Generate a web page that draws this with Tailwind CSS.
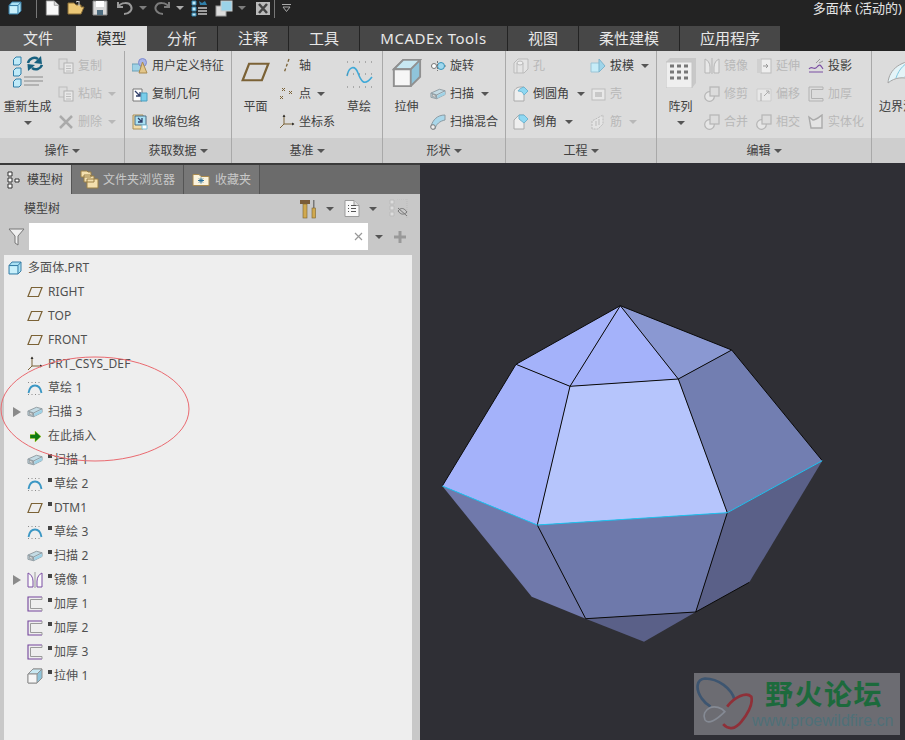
<!DOCTYPE html>
<html lang="zh-CN"><head><meta charset="utf-8"><title>多面体</title>
<script src="https://cdn.jsdelivr.net/npm/@tailwindcss/browser@4"></script></head>
<body class="w-[905px] h-[740px] overflow-hidden bg-[#232323] text-[#404040] text-xs font-['Noto_Sans','Noto_Sans_CJK_SC',sans-serif]">
<svg class="hidden"><defs>
<symbol id="dn" viewBox="0 0 8 4"><polygon points="0,0 8,0 4,4" fill="currentColor"/></symbol>
<symbol id="cube" viewBox="0 0 14 14"><path d="M1 4.500 4 1H13V10L10 13H1Z" fill="#a9e1f4" stroke="#3a7fa6"/><path d="M1 4.500H10V13M10 4.500 13 1" fill="none" stroke="#3a7fa6"/><path d="M2 5.500H9V12H2Z" fill="#c9f0fb"/></symbol>
<symbol id="plane" viewBox="0 0 16 12"><path d="M4.500 1.500H15L11.500 10.500H1Z" fill="none" stroke="#7b6236" stroke-width="1.200"/></symbol>
<symbol id="sketch" viewBox="0 0 16 14"><path d="M1.500 12C2.500 6 5 4.500 8 4.500S13.500 6 14.500 12" fill="none" stroke="#3b97c4" stroke-width="1.800"/><path d="M1 1.500H15M1 13.500H15" stroke="#8a8a8a" stroke-dasharray="1 2.500" fill="none"/></symbol>
<symbol id="sweep" viewBox="0 0 17 12"><path d="M1 5 10 1 16 2.500V6.500L7 11 1 9.500Z" fill="#c4dbe4" stroke="#8f9aa0"/><path d="M1 5 7 7V11M7 7 16 2.500" fill="none" stroke="#8f9aa0"/><path d="M8 7.500 16 3.500V6.500L8 10.500Z" fill="#9fd2e6"/><path d="M2.500 6.500 6 7.500V9.500L2.500 8.500Z" fill="#eee" stroke="#707070" stroke-width=".6"/></symbol>
<symbol id="thick" viewBox="0 0 16 16"><path d="M15 1H1V15H15" fill="none" stroke="#74459c" stroke-width="1.100"/><path d="M15 3.500H3.500V12.500H15V15M15 1V3.500" fill="none" stroke="#9a9a9a"/></symbol>
<symbol id="thickg" viewBox="0 0 16 16"><path d="M15 1H1V15H15V12.500H3.500V3.500H15Z" fill="none" stroke="#b2b2b2"/></symbol>
<symbol id="mirror" viewBox="0 0 16 16"><path d="M8 0V16" stroke="#9a9a9a"/><path d="M6 15H1V1C3.500 2 6 5 6 9Z" fill="#fafafa" stroke="#7b4ea3"/><path d="M10 15H15V1C12.500 2 10 5 10 9Z" fill="#fafafa" stroke="#7b4ea3"/></symbol>
<symbol id="mirrorg" viewBox="0 0 16 16"><path d="M8 0V16" stroke="#b5b5b5"/><path d="M6 15H1V1C3.500 2 6 5 6 9Z" fill="#e8e8e8" stroke="#b5b5b5"/><path d="M10 15H15V1C12.500 2 10 5 10 9Z" fill="#e8e8e8" stroke="#b5b5b5"/></symbol>
<symbol id="extr" viewBox="0 0 16 16"><path d="M1 6 6 1H15V10L10 15H1Z" fill="#8fc4da" stroke="#909090"/><path d="M6 1H15L10 6H1Z" fill="#c8e8f2" stroke="#909090"/><path d="M1 6H10V15H1Z" fill="#f6f6f6" stroke="#909090"/></symbol>
<symbol id="circ" viewBox="0 0 16 16"><circle cx="5.500" cy="10.500" r="4.800" fill="#e6e6e6" stroke="#b5b5b5" stroke-width="1.200"/><rect x="6" y="1" width="9" height="9" fill="#dcdcdc" stroke="#b5b5b5" stroke-width="1.200"/></symbol>
<symbol id="regen" viewBox="0 0 30 32"><g stroke="#2f7ea8" fill="#bfeaf8"><path d="M.5 3.500 3 1H8V7L6 9H.500Z"/><path d="M.5 14.500 3 12H8V18L6 20H.500Z"/><path d="M.5 25.500 3 23H8V29L6 31H.500Z"/></g><path d="M15 7A6.500 6.500 0 0 1 25 3" fill="none" stroke="#17607f" stroke-width="2.500"/><polygon points="28,0 29,8 21,7" fill="#17607f"/><path d="M29 9A6.500 6.500 0 0 1 19 12" fill="none" stroke="#17607f" stroke-width="2.500"/><polygon points="15,15 14.500,8 22,9" fill="#17607f"/><path d="M11 21H30M11 25H30M11 29H26" stroke="#a5a5a5" stroke-width="1.500"/></symbol>
<symbol id="page" viewBox="0 0 16 18"><path d="M1 1H10L15 6V17H1Z" fill="#f8f8f8" stroke="#9a9a9a"/><path d="M10 1V6H15" fill="#ddd" stroke="#9a9a9a"/></symbol>
<symbol id="copy" viewBox="0 0 16 16"><rect x="1" y="1" width="8" height="10" fill="#dcdcdc" stroke="#bcbcbc"/><rect x="6" y="5" width="9" height="10" fill="#e8e8e8" stroke="#b2b2b2"/><path d="M8 8H13M8 10.500H13M8 13H13" stroke="#bcbcbc"/></symbol>
<symbol id="folder" viewBox="0 0 18 14"><path d="M1 13V2H7L9 4H17V13Z" fill="#fbf3dc" stroke="#a98a4e"/></symbol>
</defs></svg>

<header class="h-[26px] pb-[10px] flex items-center text-[#9b9b9b] relative">
  <svg class="w-[14px] h-[14px] ml-[8px] -mt-[1px]" viewBox="0 0 14 14"><use href="#cube"/></svg>
  <span class="w-px h-[19px] bg-[#777] ml-[14px]"></span>
  <svg class="w-[15px] h-[16px] ml-[8px]"><use href="#page"/></svg>
  <svg class="w-[18px] h-[14px] ml-[7px]" viewBox="0 0 18 14"><path d="M1 13V2H7L9 4H14V6H17L14 13Z" fill="#ecc877" stroke="#8d7038"/><path d="M9 1 12 0V5" stroke="#ddd" fill="none"/></svg>
  <svg class="w-[16px] h-[16px] ml-[7px]" viewBox="0 0 16 16"><path d="M1 1H15V15H1Z" fill="#d8d8d8" stroke="#8b8b8b"/><path d="M4 1H12V7H4Z" fill="#fff"/><path d="M5 10H11V15H5Z" fill="#4f6d80"/></svg>
  <svg class="w-[18px] h-[14px] ml-[8px]" viewBox="0 0 18 14"><path d="M2 1V6H7M2 6C5 1 13 1 15 5S13 13 8 13" fill="none" stroke="#9a9a9a" stroke-width="2"/></svg>
  <svg class="w-[8px] h-[4px] ml-[5px] text-[#7d7d7d]"><use href="#dn"/></svg>
  <svg class="w-[17px] h-[14px] ml-[7px]" viewBox="0 0 17 14"><path d="M15 1V6H10M15 6C12 1 4 1 2 5S4 13 9 13" fill="none" stroke="#7b7b7b" stroke-width="2"/></svg>
  <svg class="w-[8px] h-[4px] ml-[5px] text-[#aaa]"><use href="#dn"/></svg>
  <svg class="w-[17px] h-[17px] ml-[7px]" viewBox="0 0 17 17"><path d="M1 1H5V5H1ZM1 7H5V11H1ZM1 13H5V16H1Z" fill="#bfeaf8" stroke="#2f7ea8"/><path d="M7 8H16M7 11H16M7 14H16" stroke="#c8c8c8" stroke-width="1.500"/><path d="M8 1 11 3 14 1 16 5H9Z" fill="#2f7ea8"/></svg>
  <svg class="w-[18px] h-[17px] ml-[7px]" viewBox="0 0 18 17"><rect x="1" y="6" width="10" height="10" fill="#ddd" stroke="#999"/><rect x="6" y="1" width="11" height="10" fill="#9bd2e8" stroke="#ccc"/></svg>
  <svg class="w-[8px] h-[4px] ml-[5px] text-[#7d7d7d]"><use href="#dn"/></svg>
  <svg class="w-[14px] h-[13px] ml-[10px]" viewBox="0 0 14 13"><rect width="14" height="13" fill="#bbb"/><path d="M3 2 11 11M11 2 3 11" stroke="#444" stroke-width="2.500"/></svg>
  <span class="w-px h-[19px] bg-[#777] ml-[4px]"></span>
  <svg class="w-[9px] h-[8px] ml-[7px]" viewBox="0 0 9 8"><path d="M0 .5H9M1 3H8L4.500 7.500Z" fill="none" stroke="#aaa"/></svg>
  <span class="ml-auto mr-[3px] text-[13px] leading-[15px] text-[#e6e6e6]">多面体 (活动的)</span>
</header>

<nav class="h-[25px] flex text-[15px] text-[#e8e8e8] leading-[24px] text-center">
  <span class="w-[76px] bg-[#5b5b5b]">文件</span>
  <span class="w-[71px] bg-[#dcdcdc] text-[#333]">模型</span>
  <span class="w-[71px] bg-[#474747] border-r border-[#232323]">分析</span>
  <span class="w-[71px] bg-[#474747] border-r border-[#232323]">注释</span>
  <span class="w-[71px] bg-[#474747] border-r border-[#232323]">工具</span>
  <span class="w-[148px] bg-[#474747] border-r border-[#232323] tracking-[.5px]">MCADEx Tools</span>
  <span class="w-[71px] bg-[#474747] border-r border-[#232323]">视图</span>
  <span class="w-[101px] bg-[#474747] border-r border-[#232323]">柔性建模</span>
  <span class="w-[100px] bg-[#474747]">应用程序</span>
</nav>

<section class="h-[112px] flex bg-[#dcdcdc]">
  <div class="w-[125px] shrink-0 flex flex-col border-r border-[#a9a9a9]">
    <div class="h-[87px] pt-[1px] flex">
      <div class="w-[55px] flex flex-col items-center">
        <div class="h-[47px] flex items-center"><svg class="w-[30px] h-[32px] -mt-[7px]"><use href="#regen"/></svg></div>
        <span class="h-4 leading-4">重新生成</span>
        <svg class="w-[8px] h-[4px] mt-[6px] text-[#555]"><use href="#dn"/></svg>
      </div>
      <div class="ml-[3px] text-[#b8b8b8]">
        <div class="h-7 flex items-center gap-[4px]"><svg class="w-4 h-4"><use href="#copy"/></svg>复制</div>
        <div class="h-7 flex items-center gap-[4px]"><svg class="w-4 h-4"><use href="#copy"/></svg>粘贴<svg class="w-[8px] h-[4px] ml-[2px]"><use href="#dn"/></svg></div>
        <div class="h-7 flex items-center gap-[4px]"><svg class="w-4 h-4" viewBox="0 0 16 16"><path d="M2 2 14 14M14 2 2 14" stroke="#aaa" stroke-width="2.500"/></svg>删除<svg class="w-[8px] h-[4px] ml-[2px]"><use href="#dn"/></svg></div>
      </div>
    </div>
    <div class="flex-1 bg-[#cecece] flex items-center justify-center gap-[3px]">操作<svg class="w-[8px] h-[4px] text-[#555]"><use href="#dn"/></svg></div>
  </div>
  <div class="w-[107px] shrink-0 flex flex-col border-r border-[#a9a9a9]">
    <div class="h-[87px] pt-[1px] pl-[7px]">
      <div class="h-7 flex items-center gap-[4px]"><svg class="w-4 h-4" viewBox="0 0 16 16"><rect y="6" width="9" height="7" fill="#9fd2e6" stroke="#6b9fb5"/><circle cx="10.500" cy="4.500" r="4" fill="#a9b4e6" stroke="#7d8ad0"/><path d="M10.500 4 15 15H7Z" fill="#e3c68a" stroke="#a98a4e"/></svg><span>用户定义特征</span></div>
      <div class="h-7 flex items-center gap-[4px]"><svg class="w-4 h-4" viewBox="0 0 16 16"><path d="M1 3H10V15H1Z" fill="#fff" stroke="#777"/><path d="M9 7H15V15H9Z" fill="#79cdea" stroke="#4c9fc0"/><path d="M3 5 8 10M8 6V10H4" stroke="#303f6a" fill="none" stroke-width="1.300"/></svg><span>复制几何</span></div>
      <div class="h-7 flex items-center gap-[4px]"><svg class="w-4 h-4" viewBox="0 0 16 16"><path d="M1 1H11V15H1Z" fill="#f2dca8" stroke="#ac9157"/><path d="M3 2H14V11H3Z" fill="#a9e1f4" stroke="#4c6f86"/><path d="M6 4 10 8M10 4V8H6" stroke="#303f6a" fill="none" stroke-width="1.300"/><path d="M10 11H15V15H10Z" fill="#fff" stroke="#7fc0d8"/></svg><span>收缩包络</span></div>
    </div>
    <div class="flex-1 bg-[#cecece] flex items-center justify-center gap-[3px]">获取数据<svg class="w-[8px] h-[4px] text-[#555]"><use href="#dn"/></svg></div>
  </div>
  <div class="w-[151px] shrink-0 flex flex-col border-r border-[#a9a9a9]">
    <div class="h-[87px] pt-[1px] flex">
      <div class="w-[47px] flex flex-col items-center">
        <div class="h-[47px] flex items-center"><svg class="w-[31px] h-[22px] -mt-[7px]" viewBox="0 0 16 12"><use href="#plane"/></svg></div>
        <span class="h-4 leading-4">平面</span>
      </div>
      <div class="w-[61px]">
        <div class="h-7 flex items-center gap-[4px]"><svg class="w-4 h-4" viewBox="0 0 16 16"><path d="M10 1 5 15" stroke="#7b6236" stroke-width="1.300" stroke-dasharray="3 2"/></svg>轴</div>
        <div class="h-7 flex items-center gap-[4px]"><svg class="w-4 h-4" viewBox="0 0 16 16"><path d="M3 2 6 5M6 2 3 5M10 5 13 8M13 5 10 8M1 10 4 13M4 10 1 13" stroke="#7b6236"/></svg>点<svg class="w-[8px] h-[4px] ml-[2px] text-[#555]"><use href="#dn"/></svg></div>
        <div class="h-7 flex items-center gap-[4px]"><svg class="w-4 h-4" viewBox="0 0 16 16"><path d="M5 1V10H15M5 10 1 14" fill="none" stroke="#7b6236"/><path d="M3.500 3 5 .5 6.500 3ZM13 8.500 15.500 10 13 11.500Z" fill="#333"/></svg>坐标系</div>
      </div>
      <div class="w-[38px] flex flex-col items-center">
        <div class="h-[47px] flex items-center"><svg class="w-[27px] h-[27px] -mt-[2px]" viewBox="0 0 27 27"><path d="M1 15C3 5 9 4 12 12S18 26 26 16" fill="none" stroke="#3fa9d8" stroke-width="1.600"/><path d="M1 1H27M1 13H27M1 26H27" stroke="#777" stroke-dasharray="1 5" fill="none"/></svg></div>
        <span class="h-4 leading-4">草绘</span>
      </div>
    </div>
    <div class="flex-1 bg-[#cecece] flex items-center justify-center gap-[3px]">基准<svg class="w-[8px] h-[4px] text-[#555]"><use href="#dn"/></svg></div>
  </div>
  <div class="w-[123px] shrink-0 flex flex-col border-r border-[#a9a9a9]">
    <div class="h-[87px] pt-[1px] flex">
      <div class="w-[47px] flex flex-col items-center">
        <div class="h-[47px] flex items-center"><svg class="w-[30px] h-[30px] -mt-[5px] ml-[1px]" viewBox="0 0 16 16"><use href="#extr"/></svg></div>
        <span class="h-4 leading-4">拉伸</span>
      </div>
      <div>
        <div class="h-7 flex items-center gap-[4px]"><svg class="w-4 h-4" viewBox="0 0 16 16"><path d="M1 8H4M12 8H16" stroke="#777"/><circle cx="4" cy="8" r="2.500" fill="#fff" stroke="#777"/><circle cx="11" cy="8" r="3.500" fill="#9fd8ee" stroke="#3a94b8"/><path d="M7.500 3V13" stroke="#777" stroke-dasharray="2 1"/></svg>旋转</div>
        <div class="h-7 flex items-center gap-[4px]"><svg class="w-4 h-3"><use href="#sweep"/></svg>扫描<svg class="w-[8px] h-[4px] ml-[3px] text-[#555]"><use href="#dn"/></svg></div>
        <div class="h-7 flex items-center gap-[4px]"><svg class="w-4 h-4" viewBox="0 0 16 16"><path d="M1 12C3 6 7 1 15 1V6C10 7 6 10 5 15H2Z" fill="#a9d7ea" stroke="#8b9aa2"/><circle cx="3" cy="13" r="2.300" fill="#eee" stroke="#777"/></svg>扫描混合</div>
      </div>
    </div>
    <div class="flex-1 bg-[#cecece] flex items-center justify-center gap-[3px]">形状<svg class="w-[8px] h-[4px] text-[#555]"><use href="#dn"/></svg></div>
  </div>
  <div class="w-[151px] shrink-0 flex flex-col border-r border-[#a9a9a9]">
    <div class="h-[87px] pt-[1px] flex pl-[7px]">
      <div class="w-[77px]">
        <div class="h-7 flex items-center gap-[4px] text-[#b8b8b8]"><svg class="w-4 h-4" viewBox="0 0 16 16"><path d="M1 5 5 1H15V11L11 15H1Z" fill="#e4e4e4" stroke="#bbb"/><ellipse cx="7" cy="5" rx="3" ry="2" fill="#eee" stroke="#bbb"/><path d="M4 5V15M10 5V15" stroke="#bbb"/></svg>孔</div>
        <div class="h-7 flex items-center gap-[4px]"><svg class="w-4 h-4" viewBox="0 0 16 16"><path d="M1 15V7C1 3 4 1 8 1H11L15 5 11 9V15Z" fill="#eee" stroke="#aaa"/><path d="M11 1 15 5 11 9C10 6 8 5 5 5 6 3 8 2 11 1Z" fill="#8fd8f2" stroke="#6fb4d0"/></svg>倒圆角<svg class="w-[8px] h-[4px] ml-[4px] text-[#555]"><use href="#dn"/></svg></div>
        <div class="h-7 flex items-center gap-[4px]"><svg class="w-4 h-4" viewBox="0 0 16 16"><path d="M1 15V6L6 1H11L15 5 11 9V15Z" fill="#eee" stroke="#aaa"/><path d="M6 1H11L15 5 11 9 6 5Z" fill="#8fd8f2" stroke="#6fb4d0"/></svg>倒角<svg class="w-[8px] h-[4px] ml-[4px] text-[#555]"><use href="#dn"/></svg></div>
      </div>
      <div>
        <div class="h-7 flex items-center gap-[4px]"><svg class="w-4 h-4" viewBox="0 0 16 16"><path d="M1 5H9L15 8 9 14H1Z" fill="#c6ecf8" stroke="#9cc4d6"/><path d="M9 1 15 8 9 14Z" fill="#9fd5ea" stroke="#7fb4cc"/></svg>拔模<svg class="w-[8px] h-[4px] ml-[3px] text-[#555]"><use href="#dn"/></svg></div>
        <div class="h-7 flex items-center gap-[4px] text-[#b8b8b8]"><svg class="w-4 h-4" viewBox="0 0 16 16"><rect x="2" y="3" width="13" height="11" fill="#e8e8e8" stroke="#bbb"/><rect x="5" y="6" width="7" height="5" fill="#c8c8c8"/></svg>壳</div>
        <div class="h-7 flex items-center gap-[4px] text-[#b8b8b8]"><svg class="w-4 h-4" viewBox="0 0 16 16"><path d="M2 15V7L13 1V10L8 15Z" fill="#e4e4e4" stroke="#bbb" stroke-dasharray="2 1"/><path d="M6 12V7M9 11V5" stroke="#bbb"/></svg>筋<svg class="w-[8px] h-[4px] ml-[3px]"><use href="#dn"/></svg></div>
      </div>
    </div>
    <div class="flex-1 bg-[#cecece] flex items-center justify-center gap-[3px]">工程<svg class="w-[8px] h-[4px] text-[#555]"><use href="#dn"/></svg></div>
  </div>
  <div class="w-[215px] shrink-0 flex flex-col border-r border-[#a9a9a9]">
    <div class="h-[87px] pt-[1px] flex">
      <div class="w-[47px] flex flex-col items-center">
        <div class="h-[47px] flex items-center"><svg class="w-[30px] h-[30px] -mt-[6px]" viewBox="0 0 30 30"><path d="M0 4 4 0H30V25L26 30H0Z" fill="#c8c8c8"/><path d="M0 4H26V30H0Z" fill="#efefef" stroke="#c4c4c4"/><path d="M4 8H8M11 8H15M18 8H22M4 14H8M11 14H15M18 14H22M4 20H8M11 20H15M18 20H22" stroke="#777" stroke-width="3"/></svg></div>
        <span class="h-4 leading-4">阵列</span>
        <svg class="w-[8px] h-[4px] mt-[6px] text-[#555]"><use href="#dn"/></svg>
      </div>
      <div class="w-[52px] text-[#b8b8b8]">
        <div class="h-7 flex items-center gap-[4px]"><svg class="w-4 h-4"><use href="#mirrorg"/></svg>镜像</div>
        <div class="h-7 flex items-center gap-[4px]"><svg class="w-4 h-4"><use href="#circ"/></svg>修剪</div>
        <div class="h-7 flex items-center gap-[4px]"><svg class="w-4 h-4"><use href="#circ"/></svg>合并</div>
      </div>
      <div class="w-[52px] text-[#b8b8b8]">
        <div class="h-7 flex items-center gap-[4px]"><svg class="w-4 h-4" viewBox="0 0 16 16"><rect x="5" y="1" width="10" height="14" fill="#eee" stroke="#bbb"/><rect x="1" y="1" width="4" height="14" fill="#d0d0d0"/><path d="M7 8H12M10 6 12 8 10 10" stroke="#999" fill="none"/></svg>延伸</div>
        <div class="h-7 flex items-center gap-[4px]"><svg class="w-4 h-4" viewBox="0 0 16 16"><path d="M1 3H15V15H1Z" fill="#e8e8e8" stroke="#ccc"/><path d="M8 10 13 5M10 5H13V8M5 7V15" stroke="#aaa" fill="none"/></svg>偏移</div>
        <div class="h-7 flex items-center gap-[4px]"><svg class="w-4 h-4"><use href="#circ"/></svg>相交</div>
      </div>
      <div>
        <div class="h-7 flex items-center gap-[4px]"><svg class="w-4 h-4" viewBox="0 0 16 16"><path d="M1 14H15" stroke="#7b4ea3"/><path d="M1 11C4 7 6 13 9 9S13 8 15 11" fill="none" stroke="#7b4ea3" stroke-width="1.200"/><path d="M8 5 12 1M11 5 15 3" stroke="#999"/></svg>投影</div>
        <div class="h-7 flex items-center gap-[4px] text-[#b8b8b8]"><svg class="w-4 h-4"><use href="#thickg"/></svg>加厚</div>
        <div class="h-7 flex items-center gap-[4px] text-[#b8b8b8]"><svg class="w-4 h-4" viewBox="0 0 16 16"><path d="M1 3 5 6C8 6 10 4 14 1V14H3Z" fill="#e4e4e4" stroke="#aaa" stroke-width="1.400"/></svg>实体化</div>
      </div>
    </div>
    <div class="flex-1 bg-[#cecece] flex items-center justify-center gap-[3px]">编辑<svg class="w-[8px] h-[4px] text-[#555]"><use href="#dn"/></svg></div>
  </div>
  <div class="flex-1 flex flex-col overflow-hidden">
    <div class="h-[87px] pt-[1px] pl-[7px] whitespace-nowrap">
      <div class="h-[47px] flex items-center"><svg class="w-[34px] h-[28px] ml-[8px] -mt-[5px] shrink-0" viewBox="0 0 34 28"><path d="M1 24C2 10 14 1 34 1V26L24 20C16 18 8 18 1 24Z" fill="#e4f4f8" stroke="#a5a5a5"/><path d="M9 19C12 10 18 3 28 1M18 18C20 11 24 6 34 4" fill="none" stroke="#7fc8e0"/></svg></div>
      <span class="h-4 leading-4 block">边界混合</span>
    </div>
    <div class="flex-1 bg-[#cecece]"></div>
  </div>
</section>

<main class="h-[577px] flex">
  <aside class="w-[420px] shrink-0 flex flex-col pt-[2px] bg-[#3a3a3a]">
    <div class="h-[29px] flex bg-[#6b6b6b] shrink-0">
      <div class="w-[72px] bg-[#c8c8c8] flex items-center border-r border-[#555]">
        <svg class="w-[13px] h-[18px] ml-[7px]" viewBox="0 0 13 18"><path d="M1 1H5V5H1ZM1 7H5V11H1ZM1 13H5V17H1ZM8 8H12V11H8Z" fill="#fff" stroke="#333"/></svg>
        <span class="ml-[7px]">模型树</span>
      </div>
      <div class="w-[112px] bg-[#777] flex items-center border-r border-[#555] text-[#c8c8c8]">
        <svg class="w-[19px] h-[19px] ml-[8px]" viewBox="0 0 19 19"><path d="M1 7V1H7L8 2H11V7ZM4 12V5H10L11 6H14V12ZM7 18V9H18V18Z" fill="#f3dfae" stroke="#9b8047"/></svg>
        <span class="ml-[4px]">文件夹浏览器</span>
      </div>
      <div class="w-[76px] bg-[#777] flex items-center border-r border-[#555] text-[#c8c8c8]">
        <svg class="w-[18px] h-[15px] ml-[8px]" viewBox="0 0 18 14"><use href="#folder"/><path d="M9 5V11M6 8H12M7 6 11 10M11 6 7 10" stroke="#2a6f9a"/></svg>
        <span class="ml-[5px]">收藏夹</span>
      </div>
    </div>
    <div class="flex-1 bg-[#c8c8c8] flex flex-col min-h-0">
      <div class="h-[29px] flex items-center shrink-0">
        <span class="ml-[24px]">模型树</span>
        <svg class="w-[16px] h-[20px] ml-[240px] shrink-0" viewBox="0 0 16 20"><path d="M0 1H10V5H0Z" fill="#7a5c38"/><rect x="3" y="5" width="4" height="14" fill="#d1a94e" stroke="#7a6330" stroke-width=".6"/><rect x="13" y="1" width="1.500" height="8" fill="#777"/><rect x="12" y="9" width="3.500" height="10" fill="#d1a94e" stroke="#7a6330" stroke-width=".6"/></svg>
        <svg class="w-[8px] h-[4px] ml-[10px] text-[#555]"><use href="#dn"/></svg>
        <svg class="w-[16px] h-[19px] ml-[10px]" viewBox="0 0 16 18"><use href="#page"/><path d="M4 6H5M7 6H12M4 9H5M7 9H12M4 12H5M7 12H12" stroke="#555"/></svg>
        <svg class="w-[8px] h-[4px] ml-[9px] text-[#555]"><use href="#dn"/></svg>
        <svg class="w-[19px] h-[19px] ml-[12px]" viewBox="0 0 19 19"><path d="M1 1H5V5H1ZM1 7H5V11H1ZM1 13H5V17H1Z" fill="#ddd" stroke="#bbb"/><path d="M8 0H18V19" fill="none" stroke="#bbb" stroke-dasharray="1 1"/><path d="M9 12C12 8 15 9 18 13 15 16 12 16 9 12ZM9 9 18 17" fill="#c8c8c8" stroke="#777"/></svg>
      </div>
      <div class="h-[27px] flex items-center shrink-0">
        <svg class="w-[17px] h-[18px] ml-[8px]" viewBox="0 0 17 18"><path d="M1 1H16L10 8V17L7 15V8Z" fill="#efefef" stroke="#777"/></svg>
        <div class="w-[339px] h-[27px] bg-white ml-[4px] flex items-center justify-end pr-[5px]"><svg class="w-[9px] h-[9px]" viewBox="0 0 9 9"><path d="M1 1 8 8M8 1 1 8" stroke="#999" stroke-width="1.200"/></svg></div>
        <svg class="w-[8px] h-[4px] ml-[7px] text-[#555]"><use href="#dn"/></svg>
        <svg class="w-[12px] h-[12px] ml-[11px]" viewBox="0 0 12 12"><path d="M6 0V12M0 6H12" stroke="#999" stroke-width="3"/></svg>
      </div>
      <div class="h-[5px] shrink-0"></div>
      <div class="ml-[4px] w-[408px] flex-1 pt-[1px] bg-[#eeeeee] relative text-[12px] text-[#505050] tracking-[.1px]">
        <div class="h-6 flex items-center pl-[4px]"><svg class="w-[14px] h-[14px]"><use href="#cube"/></svg><span class="ml-[6px]">多面体.PRT</span></div>
        <div class="h-6 flex items-center pl-[23px]"><svg class="w-4 h-3" viewBox="0 0 16 12"><use href="#plane"/></svg><span class="ml-[5px]">RIGHT</span></div>
        <div class="h-6 flex items-center pl-[23px]"><svg class="w-4 h-3" viewBox="0 0 16 12"><use href="#plane"/></svg><span class="ml-[5px]">TOP</span></div>
        <div class="h-6 flex items-center pl-[23px]"><svg class="w-4 h-3" viewBox="0 0 16 12"><use href="#plane"/></svg><span class="ml-[5px]">FRONT</span></div>
        <div class="h-6 flex items-center pl-[23px]"><svg class="w-4 h-4" viewBox="0 0 16 16"><path d="M5 1V10H15M5 10 1 14" fill="none" stroke="#7b6236"/><path d="M3.500 3 5 .5 6.500 3ZM13 8.500 15.500 10 13 11.500Z" fill="#333"/></svg><span class="ml-[5px]">PRT_CSYS_DEF</span></div>
        <div class="h-6 flex items-center pl-[23px]"><svg class="w-4 h-[14px]"><use href="#sketch"/></svg><span class="ml-[5px]">草绘 1</span></div>
        <div class="h-6 flex items-center pl-[9px]"><svg class="w-[8px] h-[10px] text-[#8a8a8a]" viewBox="0 0 8 10"><polygon points="0,0 8,5 0,10" fill="currentColor"/></svg><svg class="w-4 h-3 ml-[6px]"><use href="#sweep"/></svg><span class="ml-[5px]">扫描 3</span></div>
        <div class="h-6 flex items-center pl-[26px]"><svg class="w-[11px] h-[11px]" viewBox="0 0 11 11"><path d="M0 3.500H5V0L11 5.500 5 11V7.500H0Z" fill="#0f7a10" stroke="#c8d800" stroke-width=".4"/></svg><span class="ml-[7px]">在此插入</span></div>
        <div class="h-6 flex items-center pl-[23px]"><svg class="w-4 h-3"><use href="#sweep"/></svg><span class="w-[4px] h-[4px] bg-[#444] ml-[5px] -mt-[9px]"></span><span class="ml-[2px]">扫描 1</span></div>
        <div class="h-6 flex items-center pl-[23px]"><svg class="w-4 h-[14px]"><use href="#sketch"/></svg><span class="w-[4px] h-[4px] bg-[#444] ml-[5px] -mt-[9px]"></span><span class="ml-[2px]">草绘 2</span></div>
        <div class="h-6 flex items-center pl-[23px]"><svg class="w-4 h-3" viewBox="0 0 16 12"><use href="#plane"/></svg><span class="w-[4px] h-[4px] bg-[#444] ml-[5px] -mt-[9px]"></span><span class="ml-[2px]">DTM1</span></div>
        <div class="h-6 flex items-center pl-[23px]"><svg class="w-4 h-[14px]"><use href="#sketch"/></svg><span class="w-[4px] h-[4px] bg-[#444] ml-[5px] -mt-[9px]"></span><span class="ml-[2px]">草绘 3</span></div>
        <div class="h-6 flex items-center pl-[23px]"><svg class="w-4 h-3"><use href="#sweep"/></svg><span class="w-[4px] h-[4px] bg-[#444] ml-[5px] -mt-[9px]"></span><span class="ml-[2px]">扫描 2</span></div>
        <div class="h-6 flex items-center pl-[9px]"><svg class="w-[8px] h-[10px] text-[#8a8a8a]" viewBox="0 0 8 10"><polygon points="0,0 8,5 0,10" fill="currentColor"/></svg><svg class="w-4 h-4 ml-[6px]"><use href="#mirror"/></svg><span class="w-[4px] h-[4px] bg-[#444] ml-[5px] -mt-[9px]"></span><span class="ml-[2px]">镜像 1</span></div>
        <div class="h-6 flex items-center pl-[23px]"><svg class="w-4 h-4"><use href="#thick"/></svg><span class="w-[4px] h-[4px] bg-[#444] ml-[5px] -mt-[9px]"></span><span class="ml-[2px]">加厚 1</span></div>
        <div class="h-6 flex items-center pl-[23px]"><svg class="w-4 h-4"><use href="#thick"/></svg><span class="w-[4px] h-[4px] bg-[#444] ml-[5px] -mt-[9px]"></span><span class="ml-[2px]">加厚 2</span></div>
        <div class="h-6 flex items-center pl-[23px]"><svg class="w-4 h-4"><use href="#thick"/></svg><span class="w-[4px] h-[4px] bg-[#444] ml-[5px] -mt-[9px]"></span><span class="ml-[2px]">加厚 3</span></div>
        <div class="h-6 flex items-center pl-[23px]"><svg class="w-4 h-4"><use href="#extr"/></svg><span class="w-[4px] h-[4px] bg-[#444] ml-[5px] -mt-[9px]"></span><span class="ml-[2px]">拉伸 1</span></div>
        <svg class="absolute left-[-4px] top-[100px] w-[195px] h-[112px]" viewBox="0 0 195 112"><ellipse cx="95" cy="54" rx="94" ry="52" fill="none" stroke="#ea6a70" stroke-width="1"/></svg>
      </div>
    </div>
  </aside>
  <div class="flex-1 bg-[#2f2f35] relative overflow-hidden">
    <svg class="absolute inset-0 w-full h-full" viewBox="420 163 485 577">
      <polygon points="620.3,305.7 516,364.3 570,386.3" fill="#a4b2fa"/>
      <polygon points="620.3,305.7 570,386.3 678.3,379" fill="#a4b2fa"/>
      <polygon points="620.3,305.7 678.3,379 731.7,350" fill="#8a98d2"/>
      <polygon points="516,364.3 570,386.3 537.3,525 442.3,486" fill="#a4b2fa"/>
      <polygon points="570,386.3 678.3,379 727.3,512.7 537.3,525" fill="#b6c5fc"/>
      <polygon points="678.3,379 731.7,350 822.3,460.7 727.3,512.7" fill="#727eb1"/>
      <polygon points="442.3,486 537.3,525 585.7,618.7 531.7,596.7" fill="#7079ab"/>
      <polygon points="537.3,525 727.3,512.7 695.7,612 585.7,618.7" fill="#6e79ab"/>
      <polygon points="727.3,512.7 822.3,460.7 749.3,582.3 695.7,612" fill="#5a6088"/>
      <polygon points="585.7,618.7 695.7,612 644,641.7" fill="#5a6088"/>
      <path d="M620.3 305.700 516 364.300 442.300 486M620.300 305.700 731.700 350 822.300 460.700M620.300 305.700 570 386.300M620.300 305.700 678.300 379M516 364.300 570 386.300 678.300 379 731.700 350M570 386.300 537.300 525 585.700 618.700 695.700 612 727.300 512.700 678.300 379M695.700 612 749.300 582.300" fill="none" stroke="#0a0a0a" stroke-width="1"/>
      <path d="M442.300 486 537.300 525 727.300 512.700 822.300 460.700" fill="none" stroke="#1ec4f2" stroke-width="1"/>
    </svg>
    <div class="absolute left-[274px] top-[510px] w-[206px] h-[62px] bg-[#6c6c72] overflow-hidden">
      <svg class="absolute left-[2px] top-[4px] w-[57px] h-[56px]" viewBox="18 36 172 168"><path d="M135 105C125 70 85 40 45 40 20 42 15 70 35 100 42 110 50 118 62 125" fill="none" stroke="#3d5570" stroke-width="8"/><path d="M100 178C115 195 135 195 155 170 175 145 190 115 185 95 170 80 135 95 112 125" fill="none" stroke="#8f3038" stroke-width="8"/><path d="M60 128C45 135 38 150 45 165 55 180 80 165 105 140 95 128 75 122 60 128Z" fill="none" stroke="#858a94" stroke-width="5"/></svg>
      <span class="absolute left-[71px] top-[2px] text-[28px] leading-[36px] font-bold tracking-[1.500px] whitespace-nowrap text-[#1c6a3c] font-['Noto_Sans_CJK_SC',sans-serif]">野火论坛</span>
      <span class="absolute left-[58px] top-[38px] text-[16px] leading-[20px] text-[#4f7078] font-['Liberation_Sans',sans-serif] whitespace-nowrap">www.proewildfire.cn</span>
    </div>
  </div>
</main>
</body></html>
